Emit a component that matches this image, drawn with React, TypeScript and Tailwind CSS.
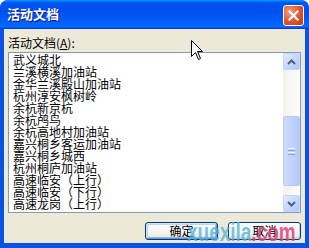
import type { ReactNode } from "react";

const items = [
  "武义城北",
  "兰溪横溪加油站",
  "金华兰溪殿山加油站",
  "杭州淳安枫树岭",
  "余杭新京杭",
  "余杭鸬鸟",
  "余杭高地村加油站",
  "嘉兴桐乡客运加油站",
  "嘉兴桐乡城西",
  "杭州桐庐加油站",
  "高速临安（上行）",
  "高速临安（下行）",
  "高速龙岗（上行）",
];

function ScrollButton({ down }: { down?: boolean }) {
  return (
    <div className="flex h-[17px] w-[17px] items-center justify-center rounded-[2px] border border-[#c3d3fd] bg-[linear-gradient(135deg,#e4ecfe,#c2d3fc_60%,#b3c8f7)]">
      <svg width="9" height="6" viewBox="0 0 9 6" className={down ? "rotate-180" : ""}>
        <path d="M1 5 L4.5 1.5 L8 5" fill="none" stroke="#4d6185" strokeWidth="2" />
      </svg>
    </div>
  );
}

function Button({ children, primary }: { children: ReactNode; primary?: boolean }) {
  return (
    <button
      className={
        "flex h-[18px] w-[73px] items-center justify-center rounded-[3px] border border-[#003c74] bg-[linear-gradient(180deg,#ffffff,#f0efea_80%,#d8d2c6)] text-[12px] leading-none text-black " +
        (primary
          ? "shadow-[inset_1px_1px_#cee7ff,inset_-1px_-1px_#6b93d6,inset_2px_2px_#bcd4f6,inset_-2px_-2px_#98b8ea]"
          : "shadow-[inset_-1px_-1px_#d6d0c5,inset_1px_1px_#ffffff]")
      }
    >
      {children}
    </button>
  );
}

export default function App() {
  return (
    <div className="relative h-[248px] w-[309px] overflow-hidden bg-white font-['Noto_Sans_CJK_SC',sans-serif]">
      <div className="flex h-full flex-col rounded-t-[8px] bg-[#0a53e0]">
        {/* title bar */}
        <div className="flex h-[29px] shrink-0 items-start justify-between rounded-t-[8px] bg-[linear-gradient(180deg,#0997ff,#0053ee_10%,#0050ee_40%,#0066ff_88%,#0066ff_93%,#005bff_95%,#003dd7_97%,#003dd7)] pl-[7px] pr-[5px]">
          <span className="mt-[7px] text-[13px] font-bold leading-[14px] text-white [text-shadow:1px_1px_#0f1089]">
            活动文档
          </span>
          <div className="mt-[5px] flex h-[21px] w-[21px] items-center justify-center rounded-[3px] border border-white bg-[radial-gradient(circle_at_30%_30%,#f0a07c,#e0532c_55%,#c33a14)]">
            <svg width="11" height="11" viewBox="0 0 11 11">
              <path d="M1.5 1.5 L9.5 9.5 M9.5 1.5 L1.5 9.5" stroke="white" strokeWidth="2.2" strokeLinecap="square" />
            </svg>
          </div>
        </div>

        {/* client */}
        <div className="mx-[4px] mb-[5px] flex flex-1 flex-col bg-[#ece9d8] px-[4px] pt-[7px]">
          <div className="h-[14px] text-[12px] leading-[14px] text-black">
            活动文档(<span className="underline">A</span>):
          </div>
          <div className="mt-[2px] flex h-[161px] border border-[#7f9db9] bg-white">
            <ul className="flex-1 pl-[4px] pt-[1px] text-[12px] leading-[12px] text-black">
              {items.map((t) => (
                <li key={t} className="h-[12px] whitespace-nowrap">
                  {t}
                </li>
              ))}
            </ul>
            <div className="flex w-[17px] flex-col bg-[linear-gradient(90deg,#f3f1ec,#fdfdfa)]">
              <ScrollButton />
              <div className="flex flex-1 flex-col pt-[46px]">
                <div className="flex h-[70px] items-center justify-center rounded-[2px] border border-[#b5c8f6] bg-[linear-gradient(90deg,#cddbfd,#c1d3fb_50%,#b5c9f7)]">
                  <div className="flex w-[7px] flex-col gap-[1px]">
                    <div className="h-px bg-[#eef3fe]" />
                    <div className="h-px bg-[#8ca6e0]" />
                    <div className="h-px bg-[#eef3fe]" />
                    <div className="h-px bg-[#8ca6e0]" />
                  </div>
                </div>
              </div>
              <ScrollButton down />
            </div>
          </div>
          <div className="mt-[9px] flex justify-end gap-[10px]">
            <Button primary>确定</Button>
            <Button>取消</Button>
          </div>
        </div>
      </div>

      {/* mouse pointer */}
      <svg className="absolute left-[191px] top-[40px]" width="13" height="21" viewBox="0 0 13 21">
        <path d="M0.5 0.5 L0.5 16.5 L4.5 12.5 L7.5 19.5 L9.5 18.5 L6.5 11.5 L11.5 11.5 Z" fill="white" stroke="black" strokeWidth="1" />
      </svg>

      {/* watermark */}
      <div className="pointer-events-none absolute left-[187px] top-[219px] origin-left scale-x-[0.73] whitespace-nowrap font-['Liberation_Sans',sans-serif] text-[26px] font-bold leading-none">
        <span className="text-[#4fb0dc]/75">xuexila</span>
        <span className="text-[#e0407f]/85">.com</span>
      </div>
    </div>
  );
}
